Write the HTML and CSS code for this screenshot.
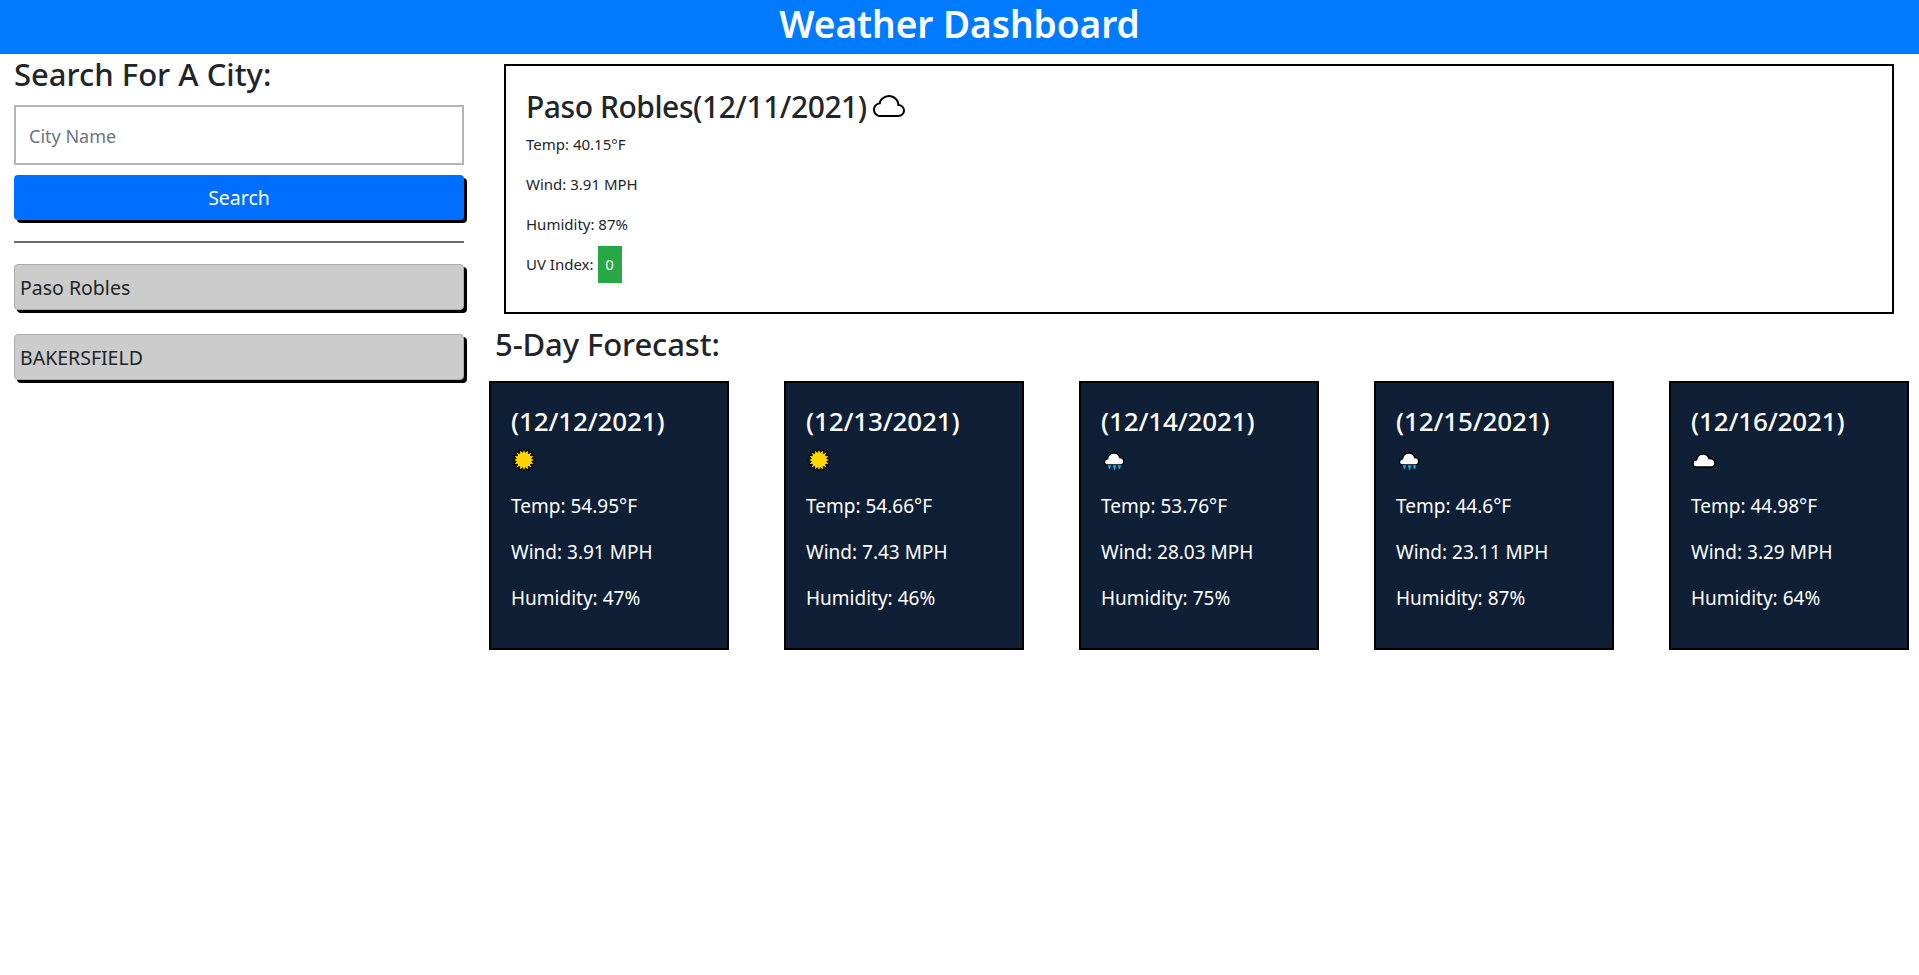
FILE: index.html
```html
<!DOCTYPE html>
<html>

<head>
  <title>Weather Dashboard</title>
  <link rel="stylesheet" href="styles.css">
</head>

<body>

  <header class="top-bar">
    <h1>Weather Dashboard</h1>
  </header>

  <!-- icons used by the forecast cards -->
  <svg class="icon-defs" width="0" height="0">
    <symbol id="sun" viewBox="0 0 24 24">
      <polygon points="12,.5 13.52,4.35 16.4,1.38 16.33,5.51 20.13,3.87 18.49,7.67 22.62,7.6 19.65,10.48 23.5,12 19.65,13.52 22.62,16.4 18.49,16.33 20.13,20.13 16.33,18.49 16.4,22.62 13.52,19.65 12,23.5 10.48,19.65 7.6,22.62 7.67,18.49 3.87,20.13 5.51,16.33 1.38,16.4 4.35,13.52 .5,12 4.35,10.48 1.38,7.6 5.51,7.67 3.87,3.87 7.67,5.51 7.6,1.38 10.48,4.35" fill="#ffd500" stroke="#000" stroke-width="1" stroke-linejoin="round" />
    </symbol>
    <symbol id="cloud" viewBox="0 0 24 24">
      <path d="M5 19c-2.400 0-4-1.500-4-3.600 0-2 1.500-3.400 3.500-3.600C5 8.500 7.600 6 11 6c3 0 5.200 1.700 6 4.500 3.300-.4 6 1.700 6 4.700 0 2.300-1.700 3.800-4 3.800z" fill="#fff" stroke="#000" stroke-width="1.500" />
    </symbol>
    <symbol id="rain" viewBox="0 0 24 24">
      <path d="M6 17c-2.200 0-3.500-1.300-3.500-3 0-1.800 1.300-3 3-3.200C6 7.700 8.500 5 12 5c3 0 5 1.800 5.700 4.600 2.500 0 4 1.800 4 4 0 2-1.500 3.400-3.500 3.400z" fill="#fff" stroke="#000" stroke-width="1.300" />
      <path d="M5.500 17h4l-1.500 4.500h-1zM10.500 17h4l-1.500 5.500h-1zM15.500 17h4l-1.500 4.500h-1z" fill="#19b5f0" stroke="#000" stroke-width=".4" />
    </symbol>
  </svg>

  <div class="page">

    <aside class="sidebar">
      <h2>Search For A City:</h2>
      <input class="city-input" type="text" placeholder="City Name">
      <button class="btn btn-search">Search</button>
      <hr>
      <button class="btn btn-city">Paso Robles</button>
      <button class="btn btn-city">BAKERSFIELD</button>
    </aside>

    <main class="content">

      <section class="today">
        <h2>Paso Robles(12/11/2021)<svg class="today-icon" viewBox="0 0 16 16">
            <path d="M4.406 3.342A5.530 5.530 0 0 1 8 2c2.690 0 4.923 2 5.166 4.579C14.758 6.804 16 8.137 16 9.773 16 11.569 14.502 13 12.687 13H3.781C1.708 13 0 11.366 0 9.318c0-1.763 1.266-3.223 2.942-3.593.143-.863.698-1.723 1.464-2.383zm.653.757c-.757.653-1.153 1.440-1.153 2.056v.448l-.445.049C2.064 6.805 1 7.952 1 9.318 1 10.785 2.230 12 3.781 12h8.906C13.980 12 15 10.988 15 9.773c0-1.216-1.020-2.228-2.313-2.228h-.5v-.5C12.188 4.825 10.328 3 8 3a4.530 4.530 0 0 0-2.941 1.100z" />
          </svg></h2>
        <p>Temp: 40.15°F</p>
        <p>Wind: 3.91 MPH</p>
        <p>Humidity: 87%</p>
        <p class="uv-line">UV Index: <span class="uv">0</span></p>
      </section>

      <h2 class="forecast-title">5-Day Forecast:</h2>

      <section class="forecast">
        <div class="card">
          <h3>(12/12/2021)</h3>
          <svg class="card-icon"><use href="#sun" /></svg>
          <p>Temp: 54.95°F</p>
          <p>Wind: 3.91 MPH</p>
          <p>Humidity: 47%</p>
        </div>
        <div class="card">
          <h3>(12/13/2021)</h3>
          <svg class="card-icon"><use href="#sun" /></svg>
          <p>Temp: 54.66°F</p>
          <p>Wind: 7.43 MPH</p>
          <p>Humidity: 46%</p>
        </div>
        <div class="card">
          <h3>(12/14/2021)</h3>
          <svg class="card-icon"><use href="#rain" /></svg>
          <p>Temp: 53.76°F</p>
          <p>Wind: 28.03 MPH</p>
          <p>Humidity: 75%</p>
        </div>
        <div class="card">
          <h3>(12/15/2021)</h3>
          <svg class="card-icon"><use href="#rain" /></svg>
          <p>Temp: 44.6°F</p>
          <p>Wind: 23.11 MPH</p>
          <p>Humidity: 87%</p>
        </div>
        <div class="card">
          <h3>(12/16/2021)</h3>
          <svg class="card-icon"><use href="#cloud" /></svg>
          <p>Temp: 44.98°F</p>
          <p>Wind: 3.29 MPH</p>
          <p>Humidity: 64%</p>
        </div>
      </section>

    </main>
  </div>

</body>

</html>
```

FILE: styles.css
```css
* {
  box-sizing: border-box;
}

body {
  margin: 0;
  font-family: "Noto Sans", "Open Sans", sans-serif;
  color: #212529;
  background-color: #fff;
}

h1,
h2,
h3,
p {
  margin: 0;
}

.icon-defs {
  position: absolute;
}

.top-bar {
  height: 54px;
  background-color: #007bff;
  color: #fff;
  text-align: center;
}

.top-bar h1 {
  font-size: 37px;
  font-weight: 600;
  line-height: 47px;
}

.page {
  display: flex;
}

.sidebar {
  width: 480px;
  flex: none;
  padding: 0 16px 0 14px;
  display: flex;
  flex-direction: column;
}

.sidebar h2 {
  font-size: 31px;
  font-weight: 500;
  line-height: 40px;
  margin: 0 0 11px;
}

.city-input {
  height: 60px;
  padding: 1px 13px 0;
  border: 2px solid #b5b5b5;
  font-family: inherit;
  font-size: 18px;
  margin-bottom: 10px;
}

.city-input::placeholder {
  color: #6c757d;
}

.btn {
  height: 46px;
  border-radius: 4px;
  font-family: inherit;
  font-size: 19.500px;
  box-shadow: 3px 3px 0 #000;
}

.btn-search {
  border: 0;
  height: 45px;
  padding-top: 1px;
  background-color: #006eff;
  color: #fff;
}

.btn-city {
  border: 1px solid #aaa;
  background-color: #ccc;
  color: #212529;
  text-align: left;
  padding: 0 5px;
  margin-bottom: 24px;
}

.sidebar hr {
  width: 100%;
  height: 2px;
  margin: 21px 0;
  border: 0;
  background-color: #6b6b6b;
}

.content {
  flex: 1;
  padding: 10px 10px 0 9px;
}

.today {
  margin: 0 15px;
  height: 250px;
  padding: 19px 20px;
  border: 2px solid #000;
}

.today h2 {
  font-size: 30px;
  font-weight: 500;
  line-height: 44px;
  letter-spacing: -.45px;
  margin-bottom: 3px;
}

.today-icon {
  width: 32px;
  height: 32px;
  margin-left: 6px;
  vertical-align: -5px;
}

.today p {
  font-size: 15px;
  line-height: 24px;
  margin-bottom: 16px;
}

.today .uv-line {
  margin: -6px 0 0;
  line-height: 37px;
  display: flex;
  gap: 4px;
}

.uv {
  display: block;
  width: 24px;
  height: 37px;
  text-align: center;
  background-color: #28a745;
  color: #fff;
}

.forecast-title {
  font-size: 31px;
  font-weight: 500;
  line-height: 44px;
  letter-spacing: -.1px;
  margin: 8px 0 15px 6px;
}

.forecast {
  display: flex;
  justify-content: space-between;
}

.card {
  width: 240px;
  height: 269px;
  padding: 20px 20px;
  background-color: #0f1f35;
  border: 2px solid #000;
  color: #fff;
}

.card h3 {
  font-size: 26px;
  font-weight: 500;
  line-height: 37px;
  letter-spacing: -.15px;
}

.card-icon {
  display: block;
  width: 24px;
  height: 24px;
  margin: 8px 0 19px 1px;
}

.card p {
  font-size: 19px;
  line-height: 30px;
  margin-bottom: 16px;
}
```
